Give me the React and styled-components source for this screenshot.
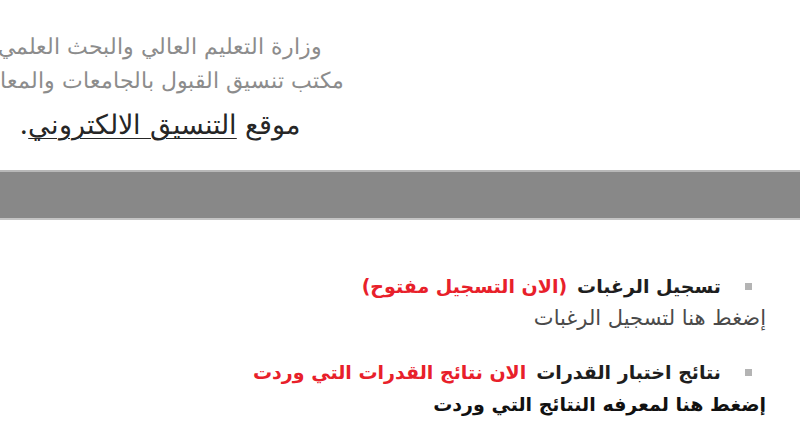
import React from "react";
import styled, { createGlobalStyle } from "styled-components";

const GlobalStyle = createGlobalStyle`
  html, body {
    margin: 0;
    padding: 0;
    background: #ffffff;
    overflow: hidden;
  }
  body {
    direction: rtl;
    font-family: "DejaVu Sans", "Liberation Sans", sans-serif;
  }
`;

const Page = styled.div`
  width: 800px;
  height: 421px;
  overflow: hidden;
`;

const Header = styled.header`
  height: 170px;
  display: flex;
  flex-direction: row;
  justify-content: flex-end;
`;

const TitleBlock = styled.div`
  width: 320px;
  padding-top: 30px;
  display: flex;
  flex-direction: column;
  align-items: center;
  font-family: "DejaVu Serif", "Liberation Serif", serif;
`;

const TitleLine = styled.div`
  white-space: nowrap;
  font-size: ${(p) => (p.$big ? "27px" : "22px")};
  color: ${(p) => (p.$big ? "#262626" : "#8c8c8c")};
  line-height: ${(p) => (p.$big ? "54px" : "34px")};
`;

const SiteLink = styled.span`
  text-decoration: underline;
  text-decoration-thickness: 1px;
  text-underline-offset: 4px;
`;

const Bar = styled.div`
  height: 46px;
  background: #888888;
  border-top: 2px solid #b8b8b8;
  border-bottom: 2px solid #c4c4c4;
`;

const List = styled.ul`
  list-style: none;
  margin: 0;
  padding: 50px 34px 0 0;
`;

const Item = styled.li`
  margin-bottom: 22px;
`;

const ItemHead = styled.div`
  display: flex;
  align-items: center;
  padding-right: 14px;
  font-size: 19px;
  font-weight: bold;
  line-height: 32px;
`;

const Bullet = styled.span`
  width: 7px;
  height: 7px;
  background: #b4b4b4;
  margin-left: 24px;
`;

const ItemTitle = styled.span`
  color: #1e1e1e;
`;

const Status = styled.span`
  color: #e8202a;
  margin-right: 10px;
`;

const ItemLink = styled.div`
  line-height: 32px;
  font-size: ${(p) => (p.$strong ? "19px" : "21px")};
  color: ${(p) => (p.$strong ? "#111111" : "#4a4a4a")};
  font-weight: ${(p) => (p.$strong ? "bold" : "normal")};
`;

const items = [
  {
    title: "تسجيل الرغبات",
    status: "(الان التسجيل مفتوح)",
    link: "إضغط هنا لتسجيل الرغبات",
    strong: false,
  },
  {
    title: "نتائج اختبار القدرات",
    status: "الان نتائج القدرات التي وردت",
    link: "إضغط هنا لمعرفه النتائج التي وردت",
    strong: true,
  },
];

export default function App() {
  return (
    <Page>
      <GlobalStyle />
      <Header>
        <TitleBlock>
          <TitleLine>وزارة التعليم العالي والبحث العلمي</TitleLine>
          <TitleLine>مكتب تنسيق القبول بالجامعات والمعاهد</TitleLine>
          <TitleLine $big>
            موقع <SiteLink>التنسيق الالكتروني</SiteLink>.
          </TitleLine>
        </TitleBlock>
      </Header>
      <Bar />
      <List>
        {items.map((it) => (
          <Item key={it.title}>
            <ItemHead>
              <Bullet />
              <ItemTitle>{it.title}</ItemTitle>
              <Status>{it.status}</Status>
            </ItemHead>
            <ItemLink $strong={it.strong}>{it.link}</ItemLink>
          </Item>
        ))}
      </List>
    </Page>
  );
}
